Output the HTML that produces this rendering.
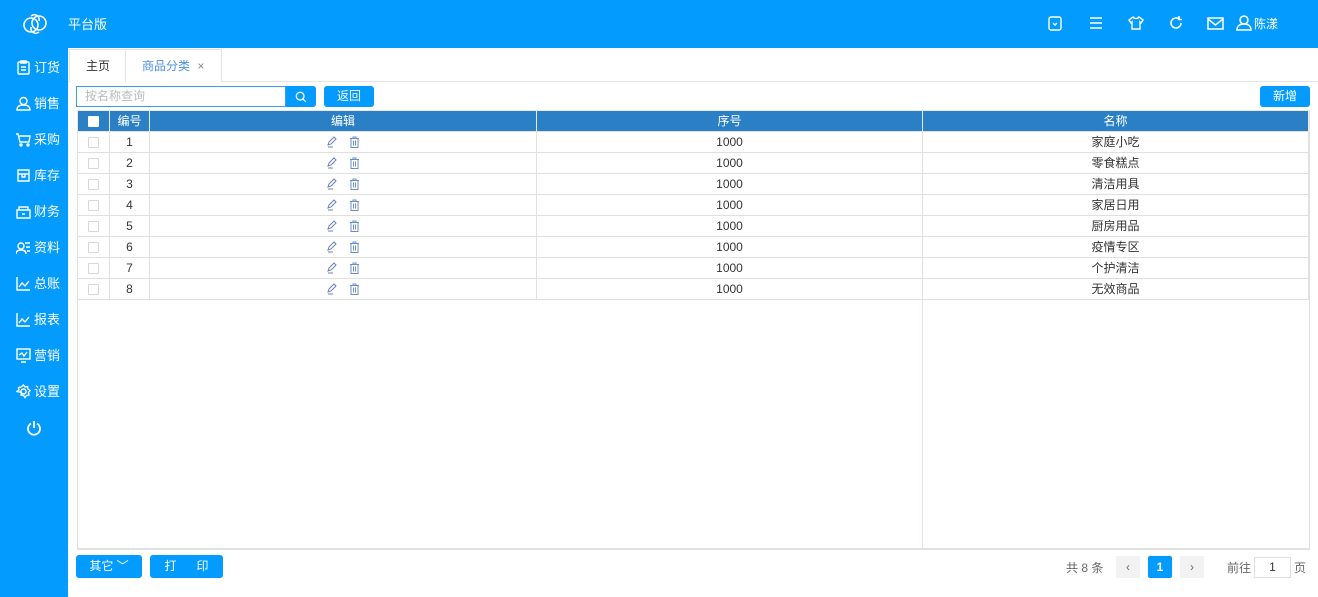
<!DOCTYPE html>
<html><head><meta charset="utf-8"><style>
*{margin:0;padding:0;box-sizing:border-box}
body{width:1318px;height:597px;overflow:hidden;background:#fff;font-family:"Liberation Sans","Noto Sans CJK SC",sans-serif;font-size:12px;color:#333;position:relative}
.top{position:absolute;left:0;top:0;width:1318px;height:48px;background:#039bfe}
.side{position:absolute;left:0;top:48px;width:68px;height:549px;background:#039bfe}
.abs{position:absolute}
.si{position:absolute;left:16px;color:#fff;font-size:13px;display:flex;align-items:center;gap:3px;line-height:15px}
.si svg{width:15px;height:15px}
.tabs{position:absolute;left:68px;top:48px;width:1250px;height:34px;border-bottom:1px solid #e4e4e4}
.tab{position:absolute;top:1px;height:33px;line-height:33px;font-size:12px;border:1px solid #e4e4e4;border-bottom:none;background:#fff}
.btn{position:absolute;background:#039bfe;color:#fff;border-radius:3px;text-align:center;font-size:12px}
table{border-collapse:collapse;position:absolute;left:77px;top:110px;width:1232px;table-layout:fixed}
td,th{border:1px solid #e0e0e0;height:21px;text-align:center;font-size:12px;font-weight:normal;padding:0;line-height:19px}
th{background:#2b80c5;color:#fff;border-color:#e8e8e8}
.cb{display:inline-block;width:11px;height:11px;border:1px solid #d8d8d8;background:#fff;vertical-align:middle;border-radius:1px}
.ic svg{vertical-align:middle}
</style></head><body>
<div class="top">
<svg class="abs" style="left:22px;top:12px" width="26" height="24" viewBox="0 0 26 24" fill="none" stroke="#fff" stroke-width="1.6"><path d="M9 4c4-3 9 0 8 5M17 20c-4 3-9 0-8-5"/><ellipse cx="9" cy="13" rx="7" ry="7"/><ellipse cx="17" cy="11" rx="7" ry="7"/></svg>
<div class="abs" style="left:68px;top:14px;color:#fff;font-size:13px">平台版</div>
<svg class="abs" style="left:1048px;top:16px" width="14" height="15" viewBox="0 0 14 15" fill="none" stroke="#fff" stroke-width="1.4"><rect x="1" y="1" width="12" height="13" rx="2"/><path d="M5 7l2 2 2-2"/></svg>
<svg class="abs" style="left:1089px;top:16px" width="14" height="14" viewBox="0 0 14 14" stroke="#fff" stroke-width="1.6"><path d="M1 2h12M1 7h12M1 12h12"/></svg>
<svg class="abs" style="left:1128px;top:15px" width="16" height="16" viewBox="0 0 16 16" fill="none" stroke="#fff" stroke-width="1.4"><path d="M5 2L1 5l2 3 1-1v7h8V7l1 1 2-3-4-3c-1 2-5 2-6 0z"/></svg>
<svg class="abs" style="left:1168px;top:15px" width="16" height="16" viewBox="0 0 16 16" fill="none" stroke="#fff" stroke-width="1.6"><path d="M13 8a5 5 0 1 1-2-4M11 1v3.5h3"/></svg>
<svg class="abs" style="left:1207px;top:16px" width="17" height="15" viewBox="0 0 17 15" fill="none" stroke="#fff" stroke-width="1.5"><rect x="1" y="2" width="15" height="11"/><path d="M1 3l7.5 6L16 3"/></svg>
<svg class="abs" style="left:1236px;top:14px" width="16" height="17" viewBox="0 0 16 17" fill="none" stroke="#fff" stroke-width="1.5"><circle cx="8" cy="6" r="4"/><path d="M1 16c0-4 3-6 7-6s7 2 7 6z"/></svg>
<div class="abs" style="left:1254px;top:15px;color:#fff;font-size:12px">陈漾</div>
</div>
<div class="side">
<div class="si" style="top:12px"><svg viewBox="0 0 15 15" fill="none" stroke="#fff" stroke-width="1.4"><rect x="2" y="2" width="11" height="12" rx="1"/><path d="M5 1h5v2H5zM5 7h5M5 10h5"/></svg>订货</div>
<div class="si" style="top:48px"><svg viewBox="0 0 15 15" fill="none" stroke="#fff" stroke-width="1.4"><circle cx="7.5" cy="5" r="3.5"/><path d="M1 14c0-4 3-5 6.5-5s6.5 1 6.5 5z"/></svg>销售</div>
<div class="si" style="top:84px"><svg viewBox="0 0 15 15" fill="none" stroke="#fff" stroke-width="1.4"><path d="M0 2h2l2 8h9l1-6H3"/><circle cx="5" cy="13" r="1"/><circle cx="12" cy="13" r="1"/></svg>采购</div>
<div class="si" style="top:120px"><svg viewBox="0 0 15 15" fill="none" stroke="#fff" stroke-width="1.4"><path d="M2 2h11v11H2zM2 6h11M6 6v3h3V6"/></svg>库存</div>
<div class="si" style="top:156px"><svg viewBox="0 0 15 15" fill="none" stroke="#fff" stroke-width="1.4"><path d="M1 6h13v8H1zM3 6V3h9v3M6 10h3"/></svg>财务</div>
<div class="si" style="top:192px"><svg viewBox="0 0 15 15" fill="none" stroke="#fff" stroke-width="1.4"><circle cx="5" cy="6" r="3"/><path d="M0 14c0-3 2-4 5-4s5 1 5 4M9 3h5M10 7h4M11 11h3"/></svg>资料</div>
<div class="si" style="top:228px"><svg viewBox="0 0 15 15" fill="none" stroke="#fff" stroke-width="1.4"><path d="M1 1v13h13M3 11l3-4 3 3 4-5"/></svg>总账</div>
<div class="si" style="top:264px"><svg viewBox="0 0 15 15" fill="none" stroke="#fff" stroke-width="1.4"><path d="M1 1v13h13M3 11l3-4 3 3 4-5"/></svg>报表</div>
<div class="si" style="top:300px"><svg viewBox="0 0 15 15" fill="none" stroke="#fff" stroke-width="1.4"><rect x="1" y="1" width="13" height="10"/><path d="M3 7l3-2 2 3 3-4M5 14h5"/></svg>营销</div>
<div class="si" style="top:336px"><svg viewBox="0 0 15 15" fill="none" stroke="#fff" stroke-width="1.4"><circle cx="7.5" cy="7.5" r="2.5"/><path d="M7.5 1l1.5 2 2.5-.5.5 2.5 2 1.5-1.5 2 .5 2.5-2.5.5-1.5 2-1.5-2-2.5-.5.5-2.5L1 7.5l2-1.5L2.5 3.5 5 3z"/></svg>设置</div>
<svg class="abs" style="left:26px;top:372px" width="16" height="16" viewBox="0 0 16 16" fill="none" stroke="#fff" stroke-width="1.8"><path d="M5 3.5a6 6 0 1 0 6 0M8 1v7"/></svg>
</div>
<div class="tabs">
<div class="tab" style="left:1px;width:57px;padding-left:16px;color:#333">主页</div>
<div class="tab" style="left:57px;width:97px;padding-left:16px;color:#4a90e2">商品分类 <span style="color:#888;margin-left:4px">×</span></div>
</div>
<div class="abs" style="left:76px;top:86px;width:210px;height:21px;border:1px solid #39a0f0;color:#bbb;padding-left:8px;line-height:19px">按名称查询</div>
<div class="btn" style="left:286px;top:86px;width:30px;height:21px;border-radius:0 3px 3px 0"><svg width="12" height="12" viewBox="0 0 14 14" fill="none" stroke="#fff" stroke-width="1.5" style="margin-top:5px"><circle cx="6" cy="6" r="4.5"/><path d="M9.5 9.5l3 3"/></svg></div>
<div class="btn" style="left:324px;top:86px;width:50px;height:21px;line-height:21px">返回</div>
<div class="btn" style="left:1260px;top:86px;width:50px;height:21px;line-height:21px">新增</div>
<div class="abs" style="left:77px;top:110px;width:1233px;height:440px;border:1px solid #e0e0e0;border-bottom:2px solid #e0e0e0"></div>
<div class="abs" style="left:922px;top:300px;width:1px;height:248px;background:#e6e6e6;box-shadow:-2px 0 4px rgba(0,0,0,.06)"></div>
<table>
<colgroup><col style="width:32px"><col style="width:40px"><col style="width:387px"><col style="width:386px"><col></colgroup>
<tr><th><span class="cb" style="border-color:#fff"></span></th><th>编号</th><th>编辑</th><th>序号</th><th>名称</th></tr>
</table>
<table id="t2" style="top:131px">
<colgroup><col style="width:32px"><col style="width:40px"><col style="width:387px"><col style="width:386px"><col></colgroup>
</table>
<script>
var n=["家庭小吃","零食糕点","清洁用具","家居日用","厨房用品","疫情专区","个护清洁","无效商品"],h="";
var ic='<svg width="12" height="12" viewBox="0 0 12 12" fill="none" stroke="#6a7fb8" stroke-width="1"><path d="M2 9l1-3 5-5 2 2-5 5zM2 11h5"/></svg>&nbsp;&nbsp;&nbsp;<svg width="11" height="12" viewBox="0 0 11 12" fill="none" stroke="#6a8fc8" stroke-width="1"><path d="M1 2.5h9M4 2.5V1h3v1.5M2 2.5v9h7v-9M4.5 4.5v5M6.5 4.5v5"/></svg>';
for(var i=0;i<8;i++)h+='<tr><td style="border-top:none"><span class="cb"></span></td><td>'+(i+1)+'</td><td class="ic">'+ic+'</td><td>1000</td><td>'+n[i]+'</td></tr>';
document.getElementById('t2').innerHTML+=h;
</script>
<div class="btn" style="left:76px;top:555px;width:66px;height:23px;line-height:23px">其它 ﹀</div>
<div class="btn" style="left:150px;top:555px;width:73px;height:23px;line-height:23px">打&nbsp;&nbsp;&nbsp;&nbsp;&nbsp;&nbsp;印</div>
<div class="abs" style="left:1066px;top:559px;color:#666">共 8 条</div>
<div class="abs" style="left:1116px;top:556px;width:24px;height:22px;background:#f2f2f2;text-align:center;line-height:22px;color:#666">‹</div>
<div class="abs" style="left:1148px;top:556px;width:24px;height:22px;background:#039bfe;color:#fff;font-weight:bold;text-align:center;line-height:22px;border-radius:2px">1</div>
<div class="abs" style="left:1180px;top:556px;width:24px;height:22px;background:#f2f2f2;text-align:center;line-height:22px;color:#666">›</div>
<div class="abs" style="left:1227px;top:559px;color:#666">前往</div>
<div class="abs" style="left:1254px;top:557px;width:37px;height:21px;border:1px solid #dcdfe6;text-align:center;line-height:19px;color:#333">1</div>
<div class="abs" style="left:1294px;top:559px;color:#666">页</div>
</body></html>
